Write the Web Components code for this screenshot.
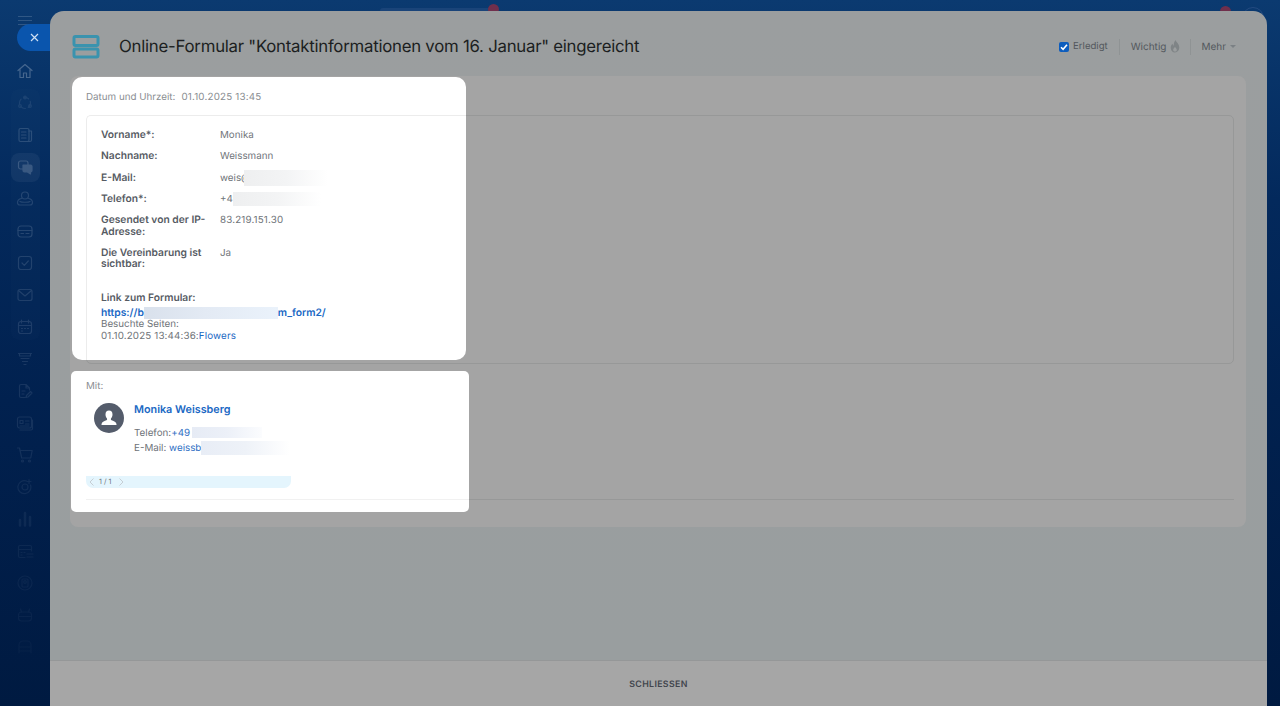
<!DOCTYPE html>
<html lang="de">
<head>
<meta charset="utf-8">
<title>Online-Formular</title>
<style>
html,body{margin:0;padding:0;height:706px;overflow:hidden;background:#02204c;font-family:Inter,"Liberation Sans",sans-serif;text-rendering:geometricPrecision}
</style>
</head>
<body>
<template id="t-shell">
<style>
:host{display:grid;grid-template-columns:50px 1fr 13px;height:706px;overflow:hidden;position:relative;
 background:linear-gradient(180deg,#0b3a70 0,#03295c 200px,#01214f 400px,#001a41 706px)}
.main{display:flex;flex-direction:column;padding-top:11px;min-width:0;height:695px;position:relative;z-index:1}
.top{position:absolute;left:50px;right:0;top:0;height:11px;display:block}
.pale{position:absolute;left:330px;top:8px;width:112px;height:3px;background:#1a4479;border-radius:3px 3px 0 0}
.b1,.b2{position:absolute;width:11px;height:11px;border-radius:50%;background:#702f4c}
.b1{left:438px;top:4px}.b2{left:1170px;top:6px}
.ring{position:absolute;left:1192px;top:7px;width:22px;height:22px;border-radius:50%;border:1px solid #234a80;box-sizing:border-box}
</style>
<slot name="side"></slot>
<div class="main"><slot></slot></div>
<div></div>
<div class="top"><i class="pale"></i><i class="b1"></i><i class="b2"></i><i class="ring"></i></div>
</template>

<template id="t-side">
<style>
:host{display:flex;flex-direction:column;align-items:center;position:relative;width:50px;color:#a9b8cb}
.burger{height:16px;width:14px;margin-top:16px;display:flex;flex-direction:column;gap:3px;opacity:.2}
.burger i{display:block;height:1px;background:#c6d2e0}
.close{position:absolute;left:17px;top:24px;width:33px;height:27px;background:#0a55ad;border-radius:14px 0 0 14px;display:flex;align-items:center;padding-left:13px;box-sizing:border-box}
.group{position:absolute;left:11px;top:89px;width:29px;height:251px;border-radius:8px;background:rgba(255,255,255,.012)}
.active{position:absolute;left:11px;top:153px;width:29px;height:29px;border-radius:8px;background:rgba(255,255,255,.05)}
.list{display:flex;flex-direction:column;position:relative;margin-top:23px}
svg.i{display:block;width:20px;height:20px;margin:6px 0;fill:none;stroke:currentColor;stroke-width:1.2;stroke-linecap:round;stroke-linejoin:round}
</style>
<div class="burger"><i></i><i></i><i></i></div>
<div class="close"><svg width="9" height="9" viewBox="0 0 9 9"><path d="M1 1l7 7M8 1l-7 7" stroke="#cfe0f4" stroke-width="1.2"/></svg></div>
<div class="group"></div><div class="active"></div>
<div class="list">
<svg class="i" style="opacity:.38" viewBox="0 0 20 20"><path d="M3 9.500L10 3.500l7 6M5 8.500V16.500h3.500v-4.500h3v4.500H15V8.500"/></svg>
<svg class="i" style="opacity:.12" viewBox="0 0 20 20"><circle cx="10" cy="10" r="5.500" stroke-dasharray="5 3"/><circle cx="10" cy="4.500" r="1.300"/><circle cx="5" cy="13" r="1.300"/><circle cx="15" cy="13" r="1.300"/></svg>
<svg class="i" style="opacity:.22" viewBox="0 0 20 20"><rect x="4" y="3.500" width="10" height="13" rx="1.500"/><path d="M14 6h2.500v9a1.500 1.500 0 0 1-1.500 1.500H6M6.500 7H11M6.500 10H11M6.500 13H11"/></svg>
<svg class="i" style="opacity:.26" viewBox="0 0 20 20"><rect x="3.500" y="4" width="9.500" height="8" rx="2"/><path fill="currentColor" d="M8 8h7.500a1.500 1.500 0 0 1 1.500 1.500v4a1.500 1.500 0 0 1-1.500 1.500V17l-3-2H9.500A1.500 1.500 0 0 1 8 13.500z"/></svg>
<svg class="i" style="opacity:.19" viewBox="0 0 20 20"><circle cx="10" cy="6.500" r="3.500"/><path d="M6.500 9.500C4 10 2.500 11.500 2.500 13.500c0 1.500 1 2.500 2.500 2.500h10c1.500 0 2.500-1 2.500-2.500 0-2-1.500-3.500-4-4M5 12.500c1.500 1 8.500 1 10 0"/></svg>
<svg class="i" style="opacity:.2" viewBox="0 0 20 20"><rect x="3" y="5" width="14" height="11" rx="3"/><path d="M3 9.500h14M6 12.500h2.500M11 12.500h3"/></svg>
<svg class="i" style="opacity:.18" viewBox="0 0 20 20"><rect x="3.500" y="3.500" width="13" height="13" rx="2.500"/><path d="M7 10l2.300 2.300L13.300 8"/></svg>
<svg class="i" style="opacity:.17" viewBox="0 0 20 20"><rect x="3" y="4.500" width="14" height="11" rx="2"/><path d="M3.500 5.500L10 11l6.500-5.500"/></svg>
<svg class="i" style="opacity:.16" viewBox="0 0 20 20"><rect x="3.500" y="4.500" width="13" height="12" rx="2.500"/><path d="M6.500 3v3M13.500 3v3M3.500 8.500h13M6.500 11.500h1M9.500 11.500h1M12.500 11.500h1M6.500 14h1"/></svg>
<svg class="i" style="opacity:.15" viewBox="0 0 20 20"><path d="M3.500 4.500h13M4.500 4.500v2.500h11V4.500M6 9.500h8M7.500 12.500h5M9 15.500h2"/></svg>
<svg class="i" style="opacity:.13" viewBox="0 0 20 20"><path d="M14.500 9V7L11 3.500H6A1.500 1.500 0 0 0 4.500 5v10A1.500 1.500 0 0 0 6 16.500h4M11 3.500V7h3.500M7 10h3M7 13h2M11 16.500l.5-2 4-4 1.500 1.500-4 4z"/></svg>
<svg class="i" style="opacity:.12" viewBox="0 0 20 20"><rect x="2.500" y="4" width="14" height="11" rx="2"/><path d="M17.500 7v8.500a1.500 1.500 0 0 1-1.500 1.500H5M5 7.500h3v3H5zM10.500 8h3.500M10.500 11h3.500M5 13h9"/></svg>
<svg class="i" style="opacity:.11" viewBox="0 0 20 20"><path d="M2.500 3h2l2.200 10h9l1.500-7.500H5.300"/><circle cx="7.500" cy="16" r="1"/><circle cx="14.500" cy="16" r="1"/></svg>
<svg class="i" style="opacity:.09" viewBox="0 0 20 20"><path d="M15.500 8a6.500 6.500 0 1 1-4-4"/><circle cx="10" cy="10" r="3"/><path d="M14 2.500v4M12 4.500h4"/></svg>
<svg class="i" style="opacity:.08" viewBox="0 0 20 20"><path d="M5 11v5.500M10 4v12.500M15 8v8.500" stroke-width="2.500"/></svg>
<svg class="i" style="opacity:.07" viewBox="0 0 20 20"><path d="M16.500 10V6A1.500 1.500 0 0 0 15 4.500H5A1.500 1.500 0 0 0 3.500 6v9A1.500 1.500 0 0 0 5 16.500h5M3.500 8.500h13M6 11.500h1M9 11.500h1M6 14h1M12 13h6M12 16h6"/></svg>
<svg class="i" style="opacity:.06" viewBox="0 0 20 20"><circle cx="10" cy="10" r="7"/><rect x="7" y="6" width="6" height="8" rx="1"/><circle cx="10" cy="9" r="1.300"/></svg>
<svg class="i" style="opacity:.05" viewBox="0 0 20 20"><rect x="3.500" y="7" width="13" height="9" rx="3"/><path d="M6.500 7L5.500 4M13.500 7l1-3M3.500 11.500h13"/></svg>
<svg class="i" style="opacity:.04" viewBox="0 0 20 20"><path d="M4 16V8a4 4 0 0 1 4-4h4a4 4 0 0 1 4 4v8M4 10h12M4 14h12"/></svg>
</div>
</template>

<template id="t-panel">
<style>
:host{display:flex;flex-direction:column;flex:1;min-height:0;border-radius:14px 14px 0 0;overflow:hidden;
 background:linear-gradient(180deg,#9b9e9f 0,#999e9f 640px)}
.body{flex:1;min-height:0;padding:0 21px 0 20px;display:flex;flex-direction:column}
</style>
<slot name="head"></slot>
<div class="body"><slot></slot></div>
<slot name="foot"></slot>
</template>

<template id="t-head">
<style>
:host{display:flex;align-items:center;height:65px;padding:6px 31px 0 22px;box-sizing:border-box;color:#1b1d20}
h1{margin:0 0 0 19px;flex:1;font:400 16.800px/22px Inter,"Liberation Sans",sans-serif;letter-spacing:-.25px;color:#1c1e21;white-space:nowrap}
.acts{display:flex;align-items:center;font-size:10px;color:#53585d;height:16px}
.sep{width:1px;height:16px;background:#8f9394;margin:0 11px}
.sep.r{margin:0 10px}
.done{font-size:9.600px}
.chk{width:10px;height:10px;border-radius:2px;background:#0d5dbd;display:flex;margin-right:4px}
.flame{margin-left:4px}
.caret{width:0;height:0;border:3px solid transparent;border-top:3px solid #7b8084;border-bottom:0;margin-left:4px}
</style>
<svg width="28" height="24" viewBox="0 0 28 24"><rect x="2" y="1.500" width="24" height="9" rx="1.500" fill="none" stroke="#3a93ae" stroke-width="3"/><rect x="2" y="14" width="24" height="8" rx="1.500" fill="none" stroke="#3a93ae" stroke-width="3"/></svg>
<h1>Online-Formular "Kontaktinformationen vom 16. Januar" eingereicht</h1>
<div class="acts">
<span class="chk"><svg width="10" height="10" viewBox="0 0 10 10"><path d="M2 5.200l2.100 2.100L8 2.800" fill="none" stroke="#fff" stroke-width="1.600"/></svg></span><span class="done">Erledigt</span>
<i class="sep"></i>
<span>Wichtig</span><svg class="flame" width="10" height="13" viewBox="0 0 10 13"><path d="M5.500 0c.5 2 3.800 3.800 3.800 7.600C9.300 10.600 7.300 12.500 5 12.500S.7 10.600.7 7.700c0-1.800 1-3 1.800-3.900.2 1 .6 1.600 1.200 1.900C3.600 3.600 4.400 1.500 5.500 0zM5 7c-1.200 1-1.800 1.900-1.800 3 0 1 .8 1.600 1.800 1.600s1.800-.6 1.800-1.600C6.800 8.900 6 8 5 7z" fill="#7f8486" fill-rule="evenodd"/></svg>
<i class="sep r"></i>
<span>Mehr</span><i class="caret"></i>
</div>
</template>

<template id="t-card">
<style>
:host{display:block;position:relative;margin-top:0;height:451px;background:#a4a4a4;border-radius:8px;box-sizing:border-box;padding:39px 12px 0 16px}
.box{height:249px;border:1px solid #979898;border-radius:5px;box-sizing:border-box}
.line{height:1px;background:#979898;margin-top:135px}
</style>
<div class="box"></div>
<div class="line"></div>
<slot></slot>
</template>

<template id="t-spot">
<style>
:host{display:block;position:absolute;background:#fff;overflow:hidden;box-sizing:border-box}
:host([data-k=a]){left:2px;top:1px;width:394px;height:283px;border-radius:10px;padding:15px 0 0 14px}
:host([data-k=b]){left:1px;top:295px;width:398px;height:141px;border-radius:5px;padding:10px 0 0 15px}
</style>
<slot></slot>
</template>

<template id="t-form">
<style>
:host{display:block;font-size:9.800px;line-height:11.500px;color:#6f7479}
.when{color:#8a8e92;height:12px}
.when span{margin-left:6px;letter-spacing:.2px}
.in{margin-top:11px;border:1px solid #ececec;border-right:0;border-bottom:0;border-radius:5px 0 0 0;height:260px;padding:14px 0 0 14px;box-sizing:border-box;width:400px}
.grid{display:grid;grid-template-columns:119px 1fr;row-gap:9.800px;width:352px}
b{font-weight:600;color:#565b63;font-size:10.250px}
.val{color:#6f7479;white-space:nowrap}
.num{letter-spacing:.16px}
.blur{display:inline-block;vertical-align:middle;margin-top:-4px;margin-bottom:-4px}
.link{margin-top:22px}
a{color:#1a68c4;text-decoration:none}
.url{font-weight:600;font-size:10.300px;display:block;margin-top:3.500px;white-space:nowrap}
.vis{letter-spacing:.14px}
</style>
<div class="when">Datum und Uhrzeit:<span>01.10.2025 13:45</span></div>
<div class="in">
<div class="grid">
<b>Vorname*:</b><span class="val">Monika</span>
<b>Nachname:</b><span class="val">Weissmann</span>
<b>E-Mail:</b><span class="val">weis@<i class="blur" style="width:84px;height:16px;margin-left:-7px;background:linear-gradient(90deg,#eeeff0,#f3f4f5 50%,#fff)"></i></span>
<b>Telefon*:</b><span class="val">+49<i class="blur" style="width:88px;height:14px;margin-left:-6px;background:linear-gradient(90deg,#eeeff0,#f3f4f5 50%,#fff)"></i></span>
<b>Gesendet von der IP-Adresse:</b><span class="val num">83.219.151.30</span>
<b>Die Vereinbarung ist sichtbar:</b><span class="val">Ja</span>
</div>
<div class="link"><b>Link zum Formular:</b>
<a class="url">https://b<i class="blur" style="width:134px;height:12px;background:linear-gradient(90deg,#d9e1ec,#e3eaf4 45%,#eaf2fb)"></i>m_form2/</a>
<div>Besuchte Seiten:</div>
<div class="vis">01.10.2025 13:44:36:<a>Flowers</a></div>
</div>
</div>
</template>

<template id="t-contact">
<style>
:host{display:block;font-size:9.800px;line-height:12px;color:#6d7278}
.mit{color:#8a8e92;height:12px}
.row{display:flex;margin:4px 0 0 8px;height:78px}
.ava{width:30px;height:30px;border-radius:50%;background:#545c6b;flex:none;margin-top:6px}
.tx{margin-left:10px;padding-top:6px}
.name{font-size:10.800px;line-height:14px;font-weight:600;color:#1a68c4;margin-bottom:9px}
.ln{height:15px;line-height:15px;white-space:nowrap}
a{color:#2f70c4}
.blur{display:inline-block;vertical-align:middle;margin-top:-3px;margin-bottom:-2px}
.pager{width:205px;height:12px;background:#e4f5fd;border-radius:0 0 7px 7px;display:flex;align-items:center;padding-left:3px;box-sizing:border-box;font-size:7.200px;color:#70767c;gap:4px;margin-top:1px}
.pager span{margin-right:3px}
hr{border:0;height:1px;background:#f1f1f1;margin:11px 0 0;width:400px}
</style>
<div class="mit">Mit:</div>
<div class="row">
<div class="ava"><svg width="30" height="30" viewBox="0 0 30 30"><path d="M15 7.500c-2.300 0-3.500 1.700-3.500 3.900 0 1.800.7 3.100 1.500 4.100.3.800.1 1.400-.6 1.800-1.700.8-4.100 1.200-4.700 3.100-.2.600-.2 1.100-.2 1.600h15c0-.5 0-1-.2-1.600-.6-1.900-3-2.300-4.700-3.100-.7-.4-.9-1-.6-1.800.8-1 1.500-2.300 1.500-4.100 0-2.200-1.200-3.900-3.500-3.900z" fill="#fff"/></svg></div>
<div class="tx">
<div class="name">Monika Weissberg</div>
<div class="ln">Telefon:<a>+49</a><i class="blur" style="width:70px;height:11px;margin-left:2px;background:linear-gradient(90deg,#e6ebf5,#ecf0f8 50%,#fbfcfe)"></i></div>
<div class="ln">E-Mail: <a>weissbe</a><i class="blur" style="width:89px;height:14px;margin-left:-6px;background:linear-gradient(90deg,#e8edf6,#eef2f8 50%,#fff)"></i></div>
</div>
</div>
<div class="pager"><svg width="6" height="8" viewBox="0 0 6 8"><path d="M4.500 .5L1 4l3.500 3.500" fill="none" stroke="#c6ced4"/></svg><span>1 / 1</span><svg width="6" height="8" viewBox="0 0 6 8"><path d="M1.500 .5L5 4 1.500 7.500" fill="none" stroke="#c6ced4"/></svg></div>
<hr>
</template>

<template id="t-foot">
<style>
:host{display:flex;align-items:center;justify-content:center;height:46px;padding-top:1px;background:#a6a6a6;border-top:1px solid #959798;box-sizing:border-box;font-size:8.800px;font-weight:600;letter-spacing:.35px;color:#41454d}
</style>
<slot></slot>
</template>

<app-shell>
<side-nav slot="side"></side-nav>
<form-panel>
<panel-head slot="head"></panel-head>
<dim-card>
<spot-light data-k="a"><form-details></form-details></spot-light>
<spot-light data-k="b"><contact-info></contact-info></spot-light>
</dim-card>
<panel-foot slot="foot">SCHLIESSEN</panel-foot>
</form-panel>
</app-shell>

<script>
const map={'app-shell':'t-shell','side-nav':'t-side','form-panel':'t-panel','panel-head':'t-head','dim-card':'t-card','spot-light':'t-spot','form-details':'t-form','contact-info':'t-contact','panel-foot':'t-foot'};
for(const [tag,id] of Object.entries(map)){
  customElements.define(tag,class extends HTMLElement{
    constructor(){super();this.attachShadow({mode:'open'}).appendChild(document.getElementById(id).content.cloneNode(true));}
  });
}
</script>
</body>
</html>
